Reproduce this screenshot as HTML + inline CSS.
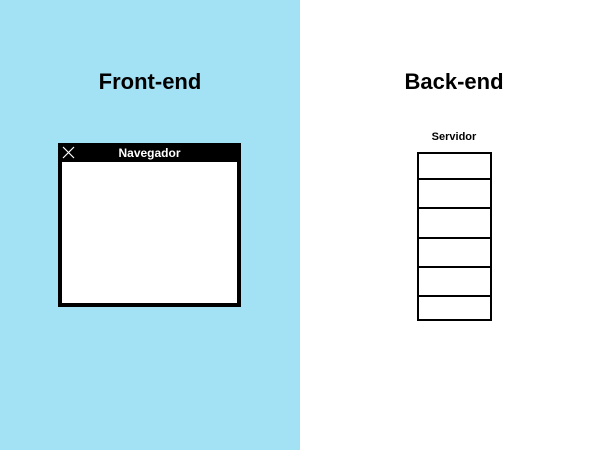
<!DOCTYPE html>
<html><head><style>
body{margin:0;width:600px;height:450px;position:relative;background:#fff;font-family:"Liberation Sans",sans-serif;overflow:hidden}
.l{position:absolute;left:0;top:0;width:300px;height:450px;background:#a3e1f5}
.t{position:absolute;font-weight:bold;font-size:22px;line-height:22px;text-align:center;color:#000}
.b{position:absolute;left:58px;top:143px;width:175px;height:141px;border:4px solid #000;border-top:19px solid #000;background:#fff}
.nv{position:absolute;left:58px;top:146px;width:183px;text-align:center;color:#fff;font-weight:bold;font-size:12px;line-height:14px}
.s{position:absolute;left:417px;width:71px;border:2px solid #000;border-bottom:none}
</style></head><body>
<div class="l"></div>
<div class="t" style="left:50px;width:200px;top:71px">Front-end</div>
<div class="t" style="left:354px;width:200px;top:71px">Back-end</div>
<div class="b"></div>
<div class="nv">Navegador</div>
<svg style="position:absolute;left:62px;top:146px" width="13" height="13"><path d="M1 1L12 12M12 1L1 12" stroke="#fff" stroke-width="1.2"/></svg>
<div style="position:absolute;left:404px;width:100px;top:131px;text-align:center;font-weight:bold;font-size:11px">Servidor</div>
<div class="s" style="top:152px;height:26px"></div>
<div class="s" style="top:178px;height:29px"></div>
<div class="s" style="top:207px;height:30px"></div>
<div class="s" style="top:237px;height:29px"></div>
<div class="s" style="top:266px;height:29px"></div>
<div class="s" style="top:295px;height:22px;border-bottom:2px solid #000"></div>
</body></html>
